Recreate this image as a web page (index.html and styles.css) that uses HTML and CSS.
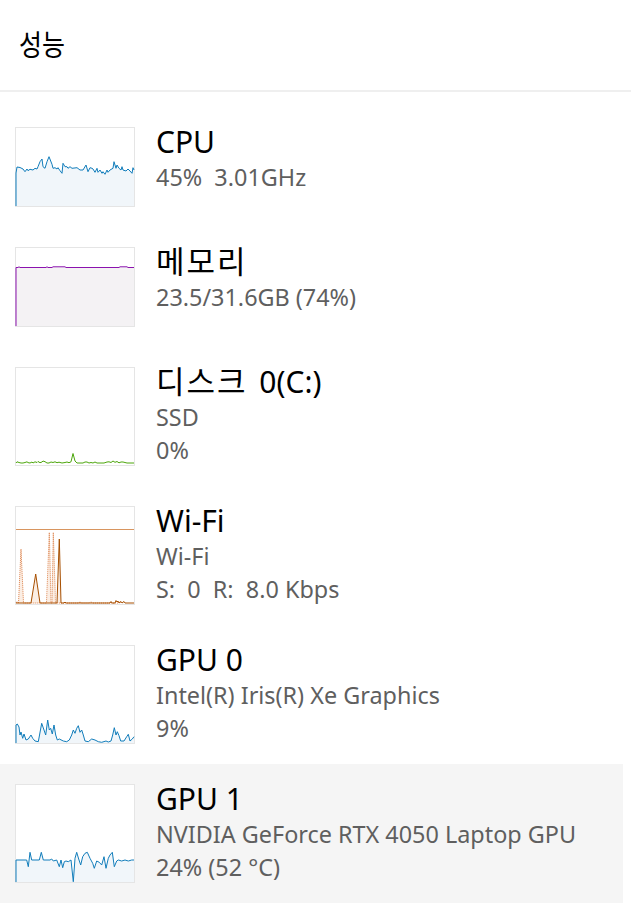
FILE: index.html
```html
<!DOCTYPE html>
<html lang="ko">
<head>
<meta charset="utf-8">
<title>성능</title>
<link rel="stylesheet" href="styles.css">
</head>
<body>
<header class="header"><h1 class="header-title">성능</h1></header>
<main class="list">
  <div class="row">
    <svg class="graph graph-sm" width="120" height="80" viewBox="0 0 120 80">
      <rect class="frame" x="0.5" y="0.5" width="119" height="79"/>
      <polygon fill="#f1f6fa" points="1,79 1,46 2,40 5,40.5 8,42 10,44.7 12,42 13,43.7 15,42.3 18,43 20,41.3 22,42 23,39.7 25,34.7 27,32 28,39.7 30,41.3 32,34.7 34,29.7 37,37.3 38,41.3 40,40.7 42,42 43,40.7 45,43.7 47,46.3 48,36.3 50,39.7 52,39.7 53,41.3 55,39.7 57,41.3 62,40.7 65,43 68,43 71,38 73,44.7 75,40.7 77,41.3 78,42 80,45.3 82,41.3 83,45.3 85,43 87,46.3 88,44.7 90,47.3 92,43 93,45.3 95,43 98,41.3 99,34.7 101,41.3 102,38 104,41.3 106,43 107,39.7 108,43 111,44 113,42 115,44 117,46.3 118,40.7 119,43 119,79"/>
      <polyline class="line" stroke="#117dbb" points="1,79 1,46 2,40 5,40.5 8,42 10,44.7 12,42 13,43.7 15,42.3 18,43 20,41.3 22,42 23,39.7 25,34.7 27,32 28,39.7 30,41.3 32,34.7 34,29.7 37,37.3 38,41.3 40,40.7 42,42 43,40.7 45,43.7 47,46.3 48,36.3 50,39.7 52,39.7 53,41.3 55,39.7 57,41.3 62,40.7 65,43 68,43 71,38 73,44.7 75,40.7 77,41.3 78,42 80,45.3 82,41.3 83,45.3 85,43 87,46.3 88,44.7 90,47.3 92,43 93,45.3 95,43 98,41.3 99,34.7 101,41.3 102,38 104,41.3 106,43 107,39.7 108,43 111,44 113,42 115,44 117,46.3 118,40.7 119,43"/>
    </svg>
    <div class="info">
      <div class="title">CPU</div>
      <div class="sub">45%&nbsp; 3.01GHz</div>
    </div>
  </div>

  <div class="row">
    <svg class="graph graph-sm" width="120" height="80" viewBox="0 0 120 80">
      <rect class="frame" x="0.5" y="0.5" width="119" height="79"/>
      <polygon fill="#f4f2f4" points="1,79 1,20.5 3,20.5 4,19.8 5,20.5 31,20.5 32,19.8 33,20.5 37,20.5 38,19.8 50,19.8 51,20.5 104,20.5 105,19.8 112,19.8 113,20.5 119,20.5 119,79"/>
      <polyline class="line" stroke="#8b12ae" points="1,79 1,20.5 3,20.5 4,19.8 5,20.5 31,20.5 32,19.8 33,20.5 37,20.5 38,19.8 50,19.8 51,20.5 104,20.5 105,19.8 112,19.8 113,20.5 119,20.5"/>
    </svg>
    <div class="info">
      <div class="title"><span class="ko">메모리</span></div>
      <div class="sub">23.5/31.6GB (74%)</div>
    </div>
  </div>

  <div class="row">
    <svg class="graph graph-lg" width="120" height="99" viewBox="0 0 120 99">
      <rect class="frame" x="0.5" y="0.5" width="119" height="98"/>
      <polyline class="line" stroke="#4da60c" points="1,96 2,94.8 4,95.5 6,96 8,96 10,95.5 12,94.8 13,95.6 15,96 17,95 18,96 20,94.8 22,95.5 23,94.5 25,95.7 27,95 28,94 30,94.7 32,96 34,96 36,95 38,95.5 40,94.8 42,95.7 44,95.2 47,96 50,95.5 52,95 54,95.7 56,94.8 58,86.5 60,94 62,96 65,96 68,96 70,95 72,95 74,96 76,95.5 78,96 80,95 82,96 84,96 86,96 89,96 92,95 94,94.8 96,95.5 98,94 100,95.3 102,94.5 104,95.8 106,95 108,95 110,95.5 112,96 115,96 119,96"/>
    </svg>
    <div class="info">
      <div class="title"><span class="ko">디스크</span> 0(C:)</div>
      <div class="sub">SSD</div>
      <div class="sub">0%</div>
    </div>
  </div>

  <div class="row">
    <svg class="graph graph-lg" width="120" height="99" viewBox="0 0 120 99">
      <rect class="frame" x="0.5" y="0.5" width="119" height="98"/>
      <line x1="1" y1="23.5" x2="119" y2="23.5" stroke="#d8955f" stroke-width="1"/>
      <polygon fill="#fbeee4" points="1,97 3.5,97 6,43 8.5,97 16,97 20.7,68 25,97 32,97 34.3,26.5 36,97 37,97 38.3,26.5 40,97 42,97 44.3,33 46,97"/>
      <polyline class="line dotted" stroke="#dd8048" points="1,97 2,95.5 3,97 3.5,97 6,43 8.5,97 31.5,97 34.3,26.5 36,97 37,97 38.3,26.5 40.5,97 64,97 65,95.5 66,97 74,97 76,96 78,97 104,97 105,95.5 106,97"/>
      <polyline class="line" stroke="#a74f01" points="1,97 16,97 20.7,68 25,97 42,97 44.3,33 46,97 49,97 50,96 51,97 95,97 96,95.5 97,97 100,97 101,94.5 102,96 103,95 104,97 106,95.5 107,97 109,95.5 110,97 119,97"/>
    </svg>
    <div class="info">
      <div class="title">Wi-Fi</div>
      <div class="sub">Wi-Fi</div>
      <div class="sub">S:&nbsp; 0&nbsp; R:&nbsp; 8.0 Kbps</div>
    </div>
  </div>

  <div class="row">
    <svg class="graph graph-lg" width="120" height="99" viewBox="0 0 120 99">
      <rect class="frame" x="0.5" y="0.5" width="119" height="98"/>
      <polygon fill="#f1f6fa" points="1,98 1,80 2.3,79 4,82 5,90 6,87 7.7,93.3 9,89 11,95 13.3,94 16,90 17.7,93.3 20,96 23.3,96.7 26.7,78.3 29,85 30.7,90 32.7,75 34.3,85 35.7,83.3 37.3,89 39,80 40.7,90 42.3,95 44.3,94 48.3,96 51.7,96.7 54.3,95 56.7,90 58.3,85 60,88.3 61.7,83.3 63.3,80.7 65,87.3 66.7,85 68.3,90 70,96 73.3,96.7 76.7,94 80,95 83.3,96.7 86.7,97.3 91,96 93.3,97 96,96 97.7,90 99.3,82.7 101,90 102.3,86.7 104,90.7 105.7,96 109,96 111.7,91.7 113.3,89.3 115,96 117.3,94 119,91.7 119,98"/>
      <polyline class="line" stroke="#117dbb" points="1,98 1,80 2.3,79 4,82 5,90 6,87 7.7,93.3 9,89 11,95 13.3,94 16,90 17.7,93.3 20,96 23.3,96.7 26.7,78.3 29,85 30.7,90 32.7,75 34.3,85 35.7,83.3 37.3,89 39,80 40.7,90 42.3,95 44.3,94 48.3,96 51.7,96.7 54.3,95 56.7,90 58.3,85 60,88.3 61.7,83.3 63.3,80.7 65,87.3 66.7,85 68.3,90 70,96 73.3,96.7 76.7,94 80,95 83.3,96.7 86.7,97.3 91,96 93.3,97 96,96 97.7,90 99.3,82.7 101,90 102.3,86.7 104,90.7 105.7,96 109,96 111.7,91.7 113.3,89.3 115,96 117.3,94 119,91.7"/>
    </svg>
    <div class="info">
      <div class="title">GPU 0</div>
      <div class="sub">Intel(R) Iris(R) Xe Graphics</div>
      <div class="sub">9%</div>
    </div>
  </div>

  <div class="row selected">
    <svg class="graph graph-lg" width="120" height="99" viewBox="0 0 120 99">
      <rect class="frame" x="0.5" y="0.5" width="119" height="98"/>
      <polygon fill="#f1f6fa" points="1,98 1,76 11.7,76 13.3,82.7 15,68.3 16.7,76 24.3,76 26.3,68.3 28.3,76 35,76 36.7,75 38.3,77 41.7,76 44.3,82.7 46,76 47.7,83.7 49.3,77.7 51,77 53.3,77.7 56,76 58.3,97.7 60,74.3 61.7,68.3 63.7,75 65.7,81 67.7,72.7 70,69.3 72.3,68.3 75,74.3 77.7,79.3 79.3,84.3 81.7,77 84.3,78.3 86.7,81 89,72.7 91,84.3 93.3,74.3 95,71 97.3,68.3 99.3,82.7 101.7,77 103.3,76 106.7,77 110,76 113.3,77 116.7,76 119,76 119,98"/>
      <polyline class="line" stroke="#117dbb" points="1,98 1,76 11.7,76 13.3,82.7 15,68.3 16.7,76 24.3,76 26.3,68.3 28.3,76 35,76 36.7,75 38.3,77 41.7,76 44.3,82.7 46,76 47.7,83.7 49.3,77.7 51,77 53.3,77.7 56,76 58.3,97.7 60,74.3 61.7,68.3 63.7,75 65.7,81 67.7,72.7 70,69.3 72.3,68.3 75,74.3 77.7,79.3 79.3,84.3 81.7,77 84.3,78.3 86.7,81 89,72.7 91,84.3 93.3,74.3 95,71 97.3,68.3 99.3,82.7 101.7,77 103.3,76 106.7,77 110,76 113.3,77 116.7,76 119,76"/>
    </svg>
    <div class="info">
      <div class="title">GPU 1</div>
      <div class="sub">NVIDIA GeForce RTX 4050 Laptop GPU</div>
      <div class="sub">24% (52 °C)</div>
    </div>
  </div>
</main>
</body>
</html>
```

FILE: styles.css
```css
* { box-sizing: border-box; }

html, body {
  margin: 0;
  padding: 0;
  background: #ffffff;
}

body {
  font-family: "Noto Sans", "Noto Sans CJK KR", sans-serif;
  color: #000000;
  width: 631px;
  overflow: hidden;
}

.header {
  height: 92px;
  border-bottom: 2px solid #efefef;
  display: flex;
  align-items: center;
  padding: 0 0 4px 19px;
}

.header-title {
  margin: 0;
  font-family: "Noto Sans CJK KR", sans-serif;
  font-weight: 400;
  font-size: 29px;
  line-height: 34px;
  transform: scaleX(0.86);
  transform-origin: left center;
}

.list {
  padding-top: 15px;
  width: 623px;
}

.row {
  display: flex;
  align-items: flex-start;
  gap: 20px;
  padding: 20px 0 20px 15px;
}

.row.selected {
  background: #f5f5f5;
}

.graph {
  flex: none;
  display: block;
  background: #ffffff;
}

.frame {
  fill: #ffffff;
  stroke: #e5e5e5;
  stroke-width: 1;
}

.line {
  fill: none;
  stroke-width: 1;
  stroke-linejoin: round;
}

.dotted {
  stroke-dasharray: 1 1;
}

.info {
  display: flex;
  flex-direction: column;
  padding-left: 1px;
  max-height: 99px;
}

.title {
  font-size: 30px;
  line-height: 38px;
  height: 38px;
  margin-top: -4px;
  color: #000000;
  white-space: nowrap;
}

.ko {
  font-family: "Noto Sans CJK KR", sans-serif;
  font-size: 31px;
  line-height: 20px;
  letter-spacing: 2px;
  margin-right: 4px;
}

.sub {
  font-size: 23.4px;
  line-height: 33px;
  height: 33px;
  color: #5f5f5f;
  white-space: nowrap;
}

.sub:last-child {
  line-height: 32px;
  height: 32px;
}
```
